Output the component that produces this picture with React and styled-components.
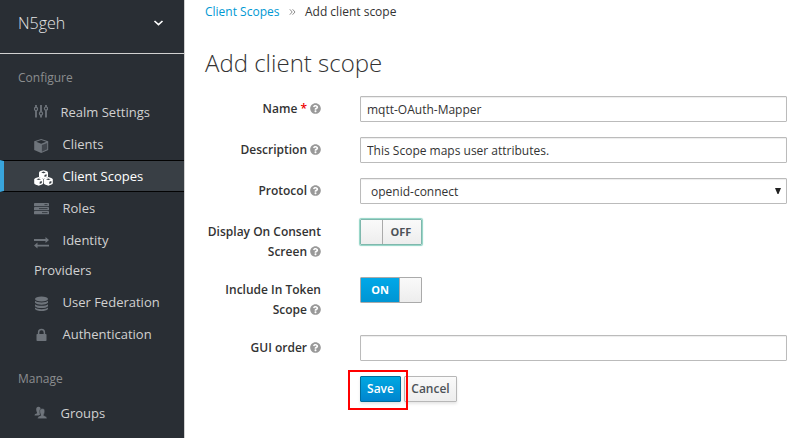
import React from "react";
import styled, { createGlobalStyle } from "styled-components";
import { FaQuestionCircle } from "react-icons/fa";

const GlobalStyle = createGlobalStyle`
  * { box-sizing: border-box; }
  body {
    margin: 0;
    background: #fff;
    font-family: "Open Sans", "Noto Sans", sans-serif;
    font-size: 12px;
    line-height: 20px;
    color: #333;
    overflow: hidden;
  }
  input, select, button { font-family: inherit; }
`;

const Page = styled.div`
  display: grid;
  grid-template-columns: 185px 1fr;
  height: 438px;
  overflow: hidden;
`;

const Sidebar = styled.nav`
  background: #292e34;
  border-right: 1px solid #d1d1d1;
  overflow: hidden;
`;

const Realm = styled.div`
  display: flex;
  align-items: center;
  justify-content: space-between;
  height: 54px;
  padding: 0 20px 7px 18px;
  border-bottom: 1px solid #d1d1d1;
  color: #e6e6e6;
  font-size: 16px;
  font-weight: 300;
`;

const GroupTitle = styled.h2`
  margin: 0;
  padding: ${(p) => (p.$first ? "14px 18px 8px" : "19px 18px 8px")};
  font-size: 12px;
  line-height: 20px;
  font-weight: 400;
  color: #8b8d8f;
`;

const NavList = styled.ul`
  list-style: none;
  margin: 0;
  padding: 0;
`;

const NavItem = styled.li`
  padding: 0 18px 0 ${(p) => (p.$active ? 30 : 34)}px;
  border: solid ${(p) => (p.$active ? "#030303" : "transparent")};
  border-width: 1px 0;
  background: ${(p) => (p.$active ? "#393f45" : "transparent")};
  ${(p) => p.$active && "border-left: 4px solid #39a5dc;"}
  color: ${(p) => (p.$active ? "#fff" : "#d1d1d1")};
  font-size: 13px;
  line-height: 30px;
  svg {
    display: inline-block;
    vertical-align: ${(p) => p.$drop ?? -4}px;
    margin-right: ${(p) => p.$gap}px;
    color: ${(p) => (p.$active ? "#fff" : "#6e747b")};
  }
`;

const Content = styled.main`
  padding: 2px 23px 0 20px;
`;

const Breadcrumb = styled.div`
  display: flex;
  align-items: center;
  height: 20px;
  svg { margin: 0 9px 0 9.5px; color: #8c8c8c; }
`;

const Crumb = styled.span`
  color: ${(p) => (p.$link ? "#0099d3" : "#333")};
`;

const Title = styled.h1`
  margin: 24px 0 17px;
  font-size: 24px;
  line-height: 33px;
  font-weight: 300;
  color: #333;
`;

const Row = styled.div`
  display: grid;
  grid-template-columns: 116px 1fr;
  column-gap: 39px;
  margin-bottom: 15px;
`;

const Label = styled.label`
  padding-top: 3px;
  text-align: right;
  font-weight: 600;
  white-space: nowrap;
`;

const Required = styled.span`
  color: #e00;
`;

const Help = styled(FaQuestionCircle)`
  width: 11px;
  height: 11px;
  margin-left: 3px;
  vertical-align: -1px;
  color: #999;
`;

const Input = styled.input`
  width: 427px;
  height: 26px;
  padding: 1px 6px 0;
  border: 1px solid #bbb;
  border-radius: 1px;
  box-shadow: inset 0 1px 1px rgba(3, 3, 3, 0.075);
  color: #333;
  font-size: 12px;
  line-height: 20px;
  outline: none;
`;

const SelectBox = styled.div`
  display: flex;
  align-items: center;
  justify-content: space-between;
  width: 427px;
  height: 26px;
  padding: 1px 5px 0 10px;
  border: 1px solid #bbb;
  border-radius: 1px;
  box-shadow: inset 0 1px 1px rgba(3, 3, 3, 0.075);
  svg { margin-bottom: 2px; }
`;

const Switch = styled.div`
  display: flex;
  width: 62px;
  height: 26px;
  border: 1px solid #aaa;
  border-radius: 1px;
  ${(p) => p.$focus && "border-color: #7fb8ad; box-shadow: 0 0 1px 1px #8fd3c4;"}
`;

const Knob = styled.span`
  width: 22px;
  background: linear-gradient(#fafafa, #ededed);
  border: solid #aaa;
  border-width: ${(p) => (p.$left ? "0 1px 0 0" : "0 0 0 1px")};
`;

const SwitchText = styled.span`
  flex: 1;
  padding-right: ${(p) => (p.$on ? 0 : 2)}px;
  text-align: center;
  font-size: 11px;
  line-height: 24px;
  font-weight: 700;
  color: ${(p) => (p.$on ? "#fff" : "#4d5258")};
  background: ${(p) => (p.$on ? "linear-gradient(#00a8e8, #0095d3)" : "linear-gradient(#fafafa, #ededed)")};
`;

const Actions = styled.div`
  display: flex;
  gap: 3px;
  padding-left: 155px;
`;

const Button = styled.button`
  height: 26px;
  width: ${(p) => (p.$primary ? 41 : 53)}px;
  padding: 0;
  border: 1px solid ${(p) => (p.$primary ? "#006e9c" : "#b7b7b7")};
  border-radius: 1px;
  background: ${(p) => (p.$primary ? "linear-gradient(#00a8e1, #0085cf)" : "linear-gradient(#fafafa, #ededed)")};
  box-shadow: 0 2px 3px rgba(3, 3, 3, 0.1);
  color: ${(p) => (p.$primary ? "#fff" : "#4d5258")};
  font-size: 12px;
  font-weight: 600;
  line-height: 22px;
`;

const Marked = styled.span`
  position: relative;
  display: flex;
`;

const Highlight = styled.span`
  position: absolute;
  top: -6px;
  left: -12px;
  width: 60px;
  height: 40px;
  border: 2px solid #f00;
`;

const icons = {
  sliders: (
    <svg width="14" height="16" viewBox="0 0 14 16" fill="none" stroke="currentColor">
      <path strokeWidth="1.8" d="M2 1v3M2 6.5v7M7 1v7M7 10.5v3M12 1v2.5M12 6v7.5" />
      <g strokeWidth="1.2" fill="#292e34">
        <circle cx="2" cy="5" r="1.6" /><circle cx="7" cy="9.4" r="1.6" /><circle cx="12" cy="4.6" r="1.6" />
      </g>
    </svg>
  ),
  cube: (
    <svg width="15" height="16" viewBox="0 0 15 16">
      <path fill="currentColor" d="M7.2.9 14.2 3.3v8.6L7.2 15 .2 11.9V3.3Z" />
      <path fill="#292e34" d="M7.2 1.9 12.2 3.7 7.2 5.7 2.2 3.7Z" />
      <path fill="#292e34" fillOpacity=".65" d="M7.9 7.1 13.2 4.9v6.4L7.9 13.7Z" />
    </svg>
  ),
  cubes: (
    <svg width="19" height="16" viewBox="0 0 19 16">
      {[[9.5, 0.2], [4.7, 7], [14.3, 7]].map(([x, y]) => (
        <g key={x} transform={`translate(${x} ${y})`}>
          <path fill="currentColor" d="M0 0 3 .9Q4.5 1.4 4.5 2.4V6Q4.5 7 3.2 7.6L0 8.8-3.2 7.6Q-4.5 7-4.5 6V2.4Q-4.5 1.4-3 .9Z" />
          <path fill="#393f45" d="M0 1.4 2.3 2.2 0 3-2.3 2.2ZM1 4.8 3.1 4v2L1 6.9Z" />
        </g>
      ))}
    </svg>
  ),
  server: (
    <svg width="15" height="14" viewBox="0 0 15 14">
      {[1, 5, 9].map((y, i) => (
        <g key={y}>
          <rect y={y} width="15" height="3.2" rx=".4" fill="currentColor" />
          <path stroke="#292e34" strokeWidth=".8" d={`M${[10.5, 5, 8][i]} ${y + 1.6}H13.5`} />
        </g>
      ))}
    </svg>
  ),
  exchange: (
    <svg width="15" height="14" viewBox="0 0 15 14" fill="currentColor">
      <path d="M0 3.1h11.5V1L15 4l-3.5 3V5H0ZM15 8.7H3.5V6.6L0 9.6l3.5 3V10.6H15Z" />
    </svg>
  ),
  database: (
    <svg width="15" height="16" viewBox="0 0 15 16" fill="currentColor">
      <ellipse cx="7.5" cy="3" rx="6.5" ry="2.5" />
      <path d="M1 4.8c2 2.1 11 2.1 13 0v2c-2 2.5-11 2.5-13 0ZM1 8.2c2 2.1 11 2.1 13 0v2c-2 2.5-11 2.5-13 0ZM1 11.6c2 2.1 11 2.1 13 0v1.3c-2 2.8-11 2.8-13 0Z" />
    </svg>
  ),
  lock: (
    <svg width="15" height="14" viewBox="0 0 15 14">
      <rect x="2.5" y="6" width="10" height="7" rx=".8" fill="currentColor" />
      <path d="M4.6 6.5V4.4a2.9 2.9 0 0 1 5.8 0v2.1" fill="none" stroke="currentColor" strokeWidth="1.5" />
    </svg>
  ),
  users: (
    <svg width="14" height="14" viewBox="0 0 14 14" fill="currentColor">
      <path d="M4.4.8C6.3.8 7 2.2 6.6 4.3 6.3 5.6 5.9 6.2 5.8 7L6 8.7 4.5 9.6H.5C.5 8.3 1.6 7.8 3.1 7.3 3.2 6 2.2 5.4 2.2 3.4 2.2 1.8 3 .8 4.4.8Z" />
      <path stroke="#292e34" strokeWidth=".5" d="M8.2 2.6C10.4 2.6 11.1 4.2 10.7 6.2 10.4 7.6 9.8 8.1 9.8 9.5 11.5 10.1 13 10.6 13 12.7H3.6C3.6 10.6 5 10.1 6.7 9.5 6.7 8.1 6.1 7.6 5.8 6.2 5.4 4.2 6 2.6 8.2 2.6Z" />
    </svg>
  ),
};

const configure = [
  { icon: "sliders", text: "Realm Settings", gap: 12.5, drop: -3 },
  { icon: "cube", text: "Clients", gap: 13.5, drop: -5 },
  { icon: "cubes", text: "Client Scopes", gap: 9.5, drop: -5, active: true },
  { icon: "server", text: "Roles", gap: 13.5, drop: -3 },
  { icon: "exchange", text: "Identity Providers", gap: 13.5, drop: -5 },
  { icon: "database", text: "User Federation", gap: 13.5, drop: -5 },
  { icon: "lock", text: "Authentication", gap: 13.5, drop: -3 },
];

const manage = [{ icon: "users", text: "Groups", gap: 12.5, drop: -2 }];

function Menu({ items }) {
  return (
    <NavList>
      {items.map((item) => (
        <NavItem key={item.text} $active={item.active} $gap={item.gap} $drop={item.drop}>
          {icons[item.icon]}
          {item.text}
        </NavItem>
      ))}
    </NavList>
  );
}

export default function App() {
  return (
    <Page>
      <GlobalStyle />
      <Sidebar>
        <Realm>
          N5geh
          <svg width="11" height="8" viewBox="0 0 11 8" fill="none" stroke="#fff" strokeWidth="1.6">
            <path d="m1.5 2 4 3.7 4-3.7" />
          </svg>
        </Realm>
        <GroupTitle $first>Configure</GroupTitle>
        <Menu items={configure} />
        <GroupTitle>Manage</GroupTitle>
        <Menu items={manage} />
      </Sidebar>
      <Content>
        <Breadcrumb>
          <Crumb $link>Client Scopes</Crumb>
          <svg width="7" height="8" viewBox="0 0 7 8" fill="none" stroke="currentColor">
            <path d="m.8 1.3 2.4 2.7-2.4 2.7M3.6 1.3 6 4 3.6 6.7" />
          </svg>
          <Crumb>Add client scope</Crumb>
        </Breadcrumb>
        <Title>Add client scope</Title>
        <Row>
          <Label>Name <Required>*</Required><Help /></Label>
          <Input defaultValue="mqtt-OAuth-Mapper" />
        </Row>
        <Row>
          <Label>Description<Help /></Label>
          <Input defaultValue="This Scope maps user attributes." />
        </Row>
        <Row>
          <Label>Protocol<Help /></Label>
          <SelectBox>
            openid-connect
            <svg width="6" height="6" viewBox="0 0 6 6"><path fill="#222" d="M0 0h6L3.5 6h-1Z" /></svg>
          </SelectBox>
        </Row>
        <Row>
          <Label>Display On Consent<br />Screen<Help /></Label>
          <Switch $focus><Knob $left /><SwitchText>OFF</SwitchText></Switch>
        </Row>
        <Row>
          <Label>Include In Token<br />Scope<Help /></Label>
          <Switch><SwitchText $on>ON</SwitchText><Knob /></Switch>
        </Row>
        <Row>
          <Label>GUI order<Help /></Label>
          <Input />
        </Row>
        <Actions>
          <Marked>
            <Button $primary>Save</Button>
            <Highlight />
          </Marked>
          <Button>Cancel</Button>
        </Actions>
      </Content>
    </Page>
  );
}
